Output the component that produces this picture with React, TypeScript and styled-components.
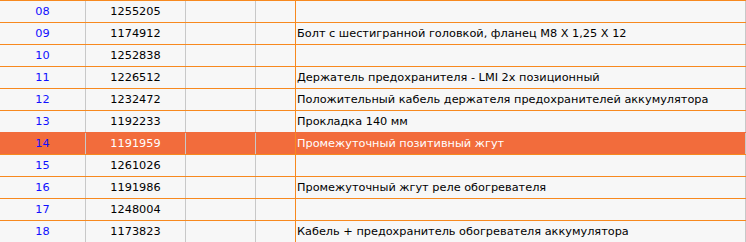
import React from 'react';
import styled, { createGlobalStyle } from 'styled-components';

const GlobalStyle = createGlobalStyle`
    html, body {
        margin: 0;
        padding: 0;
        background: #f7f7f7;
    }
`;

interface Part {
    pos: string;
    code: string;
    name: string;
}

const parts: Part[] = [
    { pos: '08', code: '1255205', name: '' },
    { pos: '09', code: '1174912', name: 'Болт с шестигранной головкой, фланец M8 X 1,25 X 12' },
    { pos: '10', code: '1252838', name: '' },
    { pos: '11', code: '1226512', name: 'Держатель предохранителя - LMI 2x позиционный' },
    { pos: '12', code: '1232472', name: 'Положительный кабель держателя предохранителей аккумулятора' },
    { pos: '13', code: '1192233', name: 'Прокладка 140 мм' },
    { pos: '14', code: '1191959', name: 'Промежуточный позитивный жгут' },
    { pos: '15', code: '1261026', name: '' },
    { pos: '16', code: '1191986', name: 'Промежуточный жгут реле обогревателя' },
    { pos: '17', code: '1248004', name: '' },
    { pos: '18', code: '1173823', name: 'Кабель + предохранитель обогревателя аккумулятора' },
];

const PartsList = styled.div`
    width: 746px;
    font-family: 'DejaVu Sans', Verdana, sans-serif;
    font-size: 11.3px;
    background: #f7f7f7;
`;

const PartRow = styled.div<{ $active?: boolean }>`
    display: grid;
    grid-template-columns: 86px 100px 70px 40px 450px;
    height: 22px;
    box-sizing: border-box;
    border-top: 1px solid ${p => (p.$active ? '#f26c3c' : '#f7891f')};
    background: ${p => (p.$active ? '#f26c3c' : '#f7f7f7')};
    color: ${p => (p.$active ? '#ffffff' : '#000000')};
`;

const Cell = styled.div<{ $align?: 'left' | 'center'; $edge?: 'gray' | 'orange' }>`
    display: flex;
    align-items: center;
    justify-content: ${p => (p.$align === 'left' ? 'flex-start' : 'center')};
    padding-left: ${p => (p.$align === 'left' ? '1px' : '0')};
    border-right: 1px solid ${p => (p.$edge === 'orange' ? '#f7891f' : '#c8c8c8')};
    white-space: nowrap;
    overflow: hidden;
`;

const PosCell = styled(Cell)`
    color: #1010ff;
`;

const App: React.FC = () => {
    return <>
        <GlobalStyle />
        <PartsList>
            {parts.map(part =>
                <PartRow key={part.pos} $active={part.pos === '14'}>
                    <PosCell>{part.pos}</PosCell>
                    <Cell>{part.code}</Cell>
                    <Cell />
                    <Cell $edge='orange' />
                    <Cell $align='left'>{part.name}</Cell>
                </PartRow>
            )}
        </PartsList>
    </>
}

export default App;
